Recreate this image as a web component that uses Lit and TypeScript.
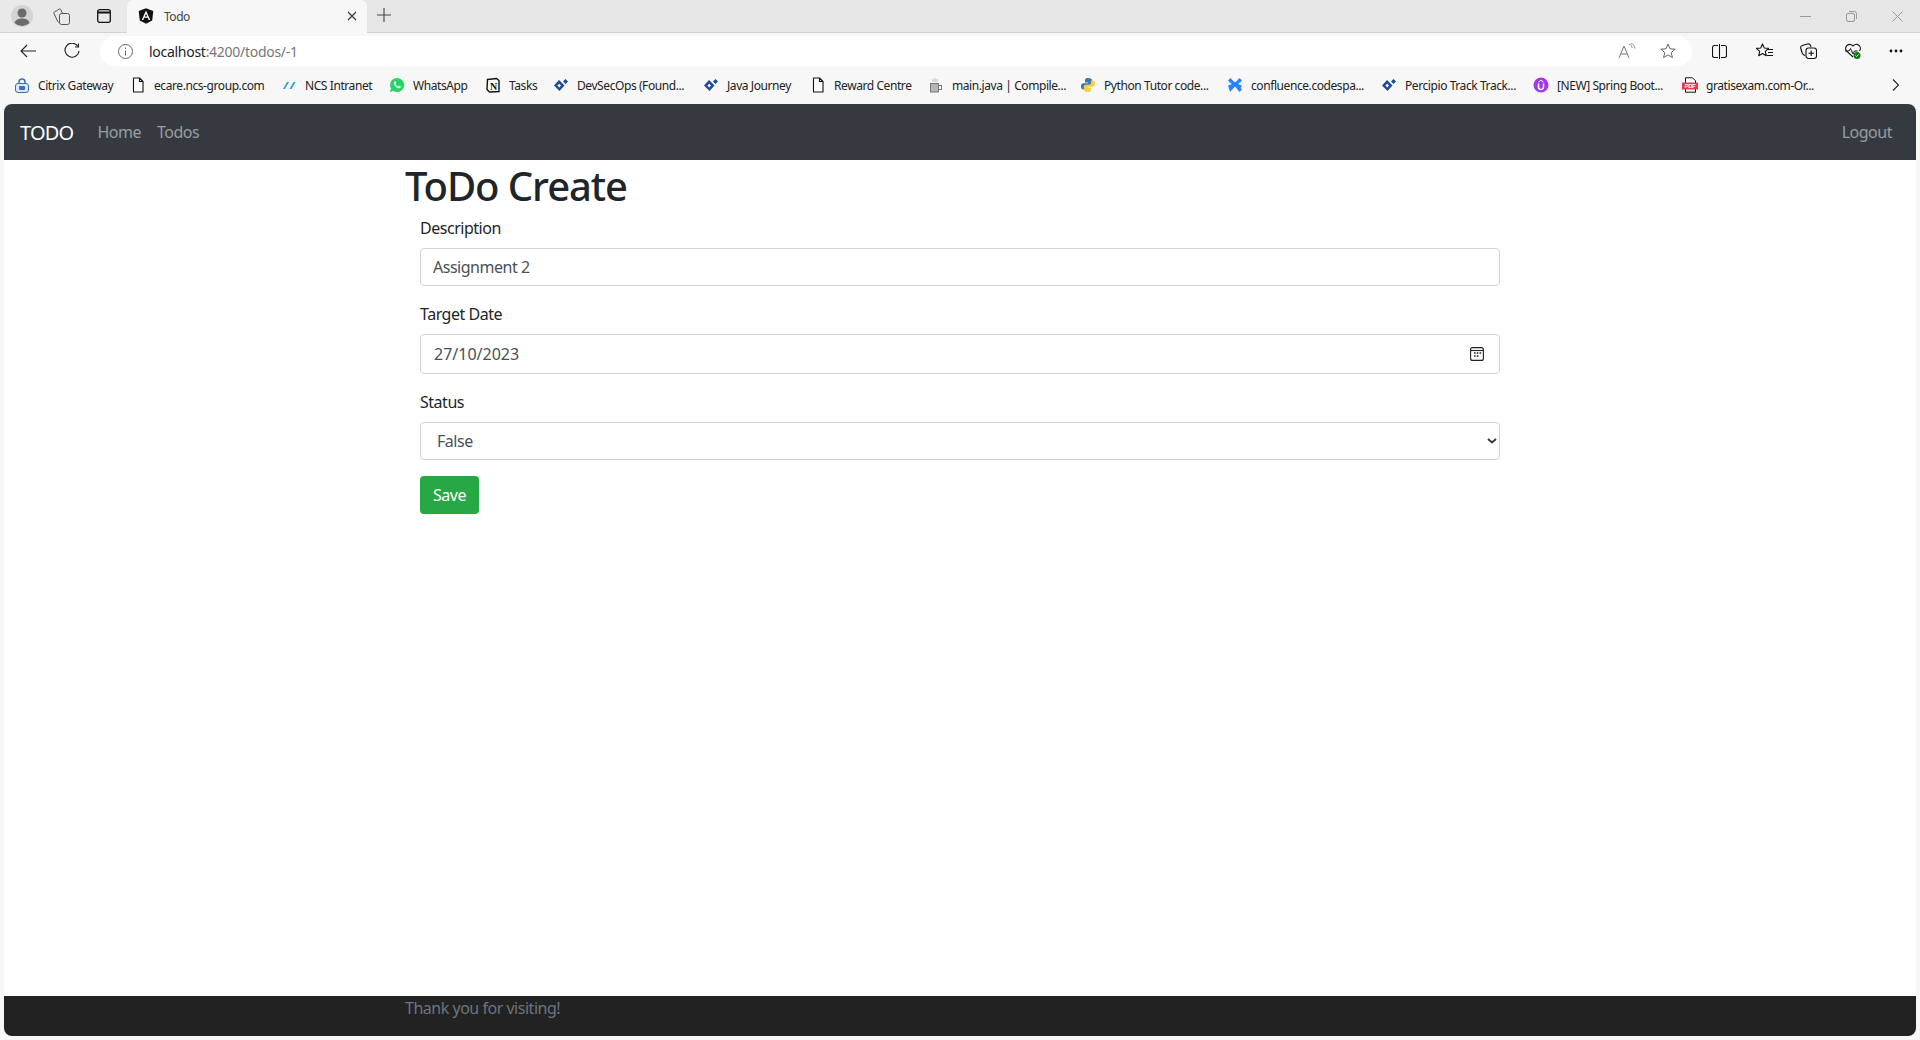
import { LitElement, css, html, svg } from "lit";
import { customElement } from "lit/decorators.js";

const fileIcon = svg`<path d="M3.5 1h6l3.5 3.5V15h-9.5z M9.5 1v3.5H13" fill="#fff" stroke="#111" stroke-width="1.1" stroke-linejoin="round"/>`;
const diamond = svg`<path d="M6 3L11.500 8.500 6.500 14 1 8.500z" fill="#1f4a94"/><path d="M6.200 6.800L8 8.500 6.200 10.400 4.400 8.500z" fill="#fff"/><path d="M12.500 2L15 4.500 12.500 7 10 4.500z" fill="#1f4a94"/>`;

const bookmarkIcons: Record<string, unknown> = {
  citrix: svg`<path d="M5 7V5a3 3 0 0 1 6 0v2" fill="none" stroke="#3d6fb8" stroke-width="1.5"/><rect x="1.5" y="6.5" width="13" height="9" rx="2.5" fill="#dbe8f8" stroke="#3d6fb8"/><rect x="5" y="9" width="6" height="4" rx="1" fill="#3d6fb8"/>`,
  file: fileIcon,
  ncs: svg`<path d="M2 12l4-7h2l-4 7z" fill="#25a5d8"/><path d="M8.5 12l4-7h2l-4 7z" fill="#25a5d8"/>`,
  whatsapp: svg`<path d="M8 1a7 7 0 0 0-6 10.500L1 15l3.600-1A7 7 0 1 0 8 1z" fill="#25d366"/><path d="M5.500 4.500c-1 1-.8 2.500.5 4.200s3 2.700 4.300 2.600c1-.1 1.700-1 1.500-1.700L10 8.600l-.9 1C8 9.200 7 8.200 6.500 7l.9-.9-.8-1.800z" fill="#fff"/>`,
  notion: svg`<path d="M2.500 2.500L11.500 1.500 14 3.500V14.500L4.500 15 2 12.500z" fill="#fff" stroke="#111" stroke-width="1.400"/><text x="8.500" y="12.500" font-size="10" font-weight="700" text-anchor="middle" font-family="Liberation Serif, serif" fill="#111">N</text>`,
  diamond,
  cup: svg`<rect x="2.500" y="6.500" width="8" height="8.500" fill="#b5b5b5" stroke="#777"/><rect x="10.500" y="8.500" width="3" height="4" fill="none" stroke="#777"/><path d="M5 2v3M7 1v4M9 2v3" stroke="#bbb"/>`,
  python: svg`<path d="M8 1C5 1 5 2.500 5 4v1.500h3.200V6.300H3.500C2 6.300 1 7.400 1 9.500c0 2 1 3 2.300 3H5V10.500c0-1.300 1-2.300 2.300-2.300h3c1.200 0 1.900-.9 1.900-2V3.500C12.200 2 10.500 1 8 1z" fill="#3b77a8"/><path d="M8 15c3 0 3-1.500 3-3v-1.500H7.800v-.8h4.700c1.500 0 2.500-1.100 2.500-3.200 0-2-1-3-2.300-3H11v2c0 1.300-1 2.300-2.300 2.300h-3c-1.200 0-1.900.9-1.900 2v2.700C3.800 14 5.500 15 8 15z" fill="#f7cf45"/>`,
  confluence: svg`<path d="M1 3.500L3.500 1c2.500 3 5 5.500 11.500 7.500L13 12C8 10 4 7 1 3.500z" fill="#2684ff"/><path d="M15 3.500L12.500 1C10 4 7.500 6.500 1 8.500L3 15l5-5.500 4.500 5.500L15 12.500C12.500 10 11 8.500 10 7.500c2-1 3.500-2.300 5-4z" fill="#2684ff"/>`,
  udemy: svg`<circle cx="8" cy="8" r="7.500" fill="#a435f0"/><path d="M5.500 6.500V10a2.500 2.500 0 0 0 5 0V6.500" fill="none" stroke="#fff" stroke-width="1.500"/><path d="M5.500 5L8 3.300 10.500 5" fill="none" stroke="#fff"/>`,
  pdf: svg`<path d="M3.500 .8h7l3 3V15.200h-10z" fill="#fff" stroke="#111"/><rect x="0" y="5.500" width="16" height="7" fill="#f03a3a"/><text x="8" y="11" font-size="6" font-weight="700" text-anchor="middle" font-family="Liberation Sans, sans-serif" fill="#fff">PDF</text>`,
};

const bookmarks = [
  { icon: "citrix", label: "Citrix Gateway", width: 75 },
  { icon: "file", label: "ecare.ncs-group.com", width: 110 },
  { icon: "ncs", label: "NCS Intranet", width: 67 },
  { icon: "whatsapp", label: "WhatsApp", width: 55 },
  { icon: "notion", label: "Tasks", width: 27 },
  { icon: "diamond", label: "DevSecOps (Found...", width: 109 },
  { icon: "diamond", label: "Java Journey", width: 66 },
  { icon: "file", label: "Reward Centre", width: 77 },
  { icon: "cup", label: "main.java | Compile...", width: 111 },
  { icon: "python", label: "Python Tutor code...", width: 106 },
  { icon: "confluence", label: "confluence.codespa...", width: 113 },
  { icon: "diamond", label: "Percipio Track Track...", width: 111 },
  { icon: "udemy", label: "[NEW] Spring Boot...", width: 108 },
  { icon: "pdf", label: "gratisexam.com-Or...", width: 110 },
];

@customElement("app-root")
export class AppRoot extends LitElement {
  static styles = css`
    * {
      margin: 0;
      padding: 0;
      box-sizing: border-box;
    }

    :host {
      display: flex;
      flex-direction: column;
      height: 1040px;
      overflow: hidden;
      background: #f7f7f7;
      font-family: "Noto Sans", "Liberation Sans", sans-serif;
      letter-spacing: -0.03em;
      color: #212529;
    }

    svg {
      display: block;
      flex: none;
    }

    .tabstrip {
      display: flex;
      align-items: flex-start;
      height: 33px;
      background: #e6e6e6;
      border-bottom: 1px solid #d2d2d2;
    }

    .tabstrip .left {
      display: flex;
      align-items: center;
      height: 32px;
      width: 127px;
      padding-left: 11px;
      background: #e9e9e9;
    }

    .tabstrip .left .collections {
      margin: 0 27px 0 20px;
    }

    .tab {
      display: flex;
      align-items: center;
      width: 240px;
      height: 33px;
      padding: 0 10px 1px 11px;
      background: #f7f7f7;
      border-radius: 6px 6px 0 0;
      font-size: 12px;
      color: #444;
    }

    .tab span {
      flex: 1;
      margin-left: 10px;
    }

    .newtab {
      margin: 8px 0 0 10px;
    }

    .winbtns {
      display: flex;
      gap: 35px;
      margin: 11px 17px 0 auto;
    }

    .toolbar {
      display: flex;
      align-items: center;
      height: 33px;
      padding: 3px 17px 0 20px;
    }

    .reload {
      margin-left: 28px;
    }

    .address {
      flex: 1;
      display: flex;
      align-items: center;
      height: 30px;
      margin: 0 20px;
      padding: 0 16px 0 18px;
      background: #fff;
      border-radius: 15px;
      font-size: 14px;
      letter-spacing: -0.02em;
      color: #777;
    }

    .address .url {
      flex: 1;
      margin-left: 16px;
    }

    .address b {
      font-weight: 400;
      color: #222;
    }

    .address .aloud {
      margin-right: 24px;
    }

    .tools {
      display: flex;
      align-items: center;
      gap: 27px;
    }

    .tools .split {
      margin-right: 2px;
    }

    .bookmarks {
      display: flex;
      align-items: center;
      gap: 17px;
      height: 38px;
      padding-left: 14px;
      font-size: 12px;
      letter-spacing: -0.035em;
      color: #222;
    }

    .bookmark {
      display: flex;
      align-items: center;
      gap: 8px;
      white-space: nowrap;
    }

    .more {
      margin-left: auto;
      margin-right: 21px;
    }

    .window {
      flex: 1;
      display: flex;
      flex-direction: column;
      margin: 0 4px 4px;
      background: #fff;
      border-radius: 8px;
      overflow: hidden;
    }

    .navbar {
      display: flex;
      align-items: center;
      height: 56px;
      padding: 8px 16px;
      background: #343a40;
    }

    .brand {
      margin-right: 16px;
      font-size: 20px;
      letter-spacing: -0.04em;
      color: #fff;
    }

    .nav-link {
      padding: 8px;
      font-size: 16px;
      color: rgba(255, 255, 255, 0.5);
    }

    .spacer {
      flex: 1;
    }

    main {
      flex: 1;
      width: 1140px;
      margin: 0 auto;
      padding: 0 15px;
    }

    h1 {
      margin-bottom: 8px;
      padding-top: 4px;
      font-size: 40px;
      font-weight: 500;
      line-height: 44px;
      letter-spacing: -0.027em;
    }

    form {
      display: flex;
      flex-direction: column;
      align-items: flex-start;
      padding: 0 15px;
    }

    .group {
      align-self: stretch;
      margin-bottom: 16px;
    }

    label {
      display: block;
      margin-bottom: 8px;
      font-size: 16px;
      line-height: 24px;
    }

    .control {
      display: flex;
      align-items: center;
      width: 100%;
      height: 38px;
      padding: 0 12px;
      background: #fff;
      border: 1px solid #ced4da;
      border-radius: 4px;
      font-family: inherit;
      font-size: 16px;
      letter-spacing: inherit;
      color: #495057;
    }

    .control.date {
      height: 40px;
      justify-content: space-between;
      padding: 0 15px 0 13px;
    }

    .control.date input {
      flex: 1;
      border: none;
      outline: none;
      font: inherit;
      letter-spacing: 0;
      color: inherit;
    }

    .select-wrap {
      position: relative;
    }

    .control.select {
      appearance: none;
      padding-left: 16px;
    }

    .select-wrap svg {
      position: absolute;
      top: 16px;
      right: 3px;
    }

    .btn {
      width: 59px;
      height: 38px;
      background: #28a745;
      border: none;
      border-radius: 4px;
      font-family: inherit;
      font-size: 16px;
      letter-spacing: inherit;
      color: #fff;
    }

    footer {
      height: 40px;
      background: #222;
    }

    footer p {
      width: 1140px;
      margin: 0 auto;
      padding: 0 15px;
      font-size: 16px;
      line-height: 24px;
      color: #6c757d;
    }
  `;

  render() {
    return html`
      <div class="tabstrip">
        <div class="left">
          <svg width="22" height="22" viewBox="0 0 22 22">
            <circle cx="11" cy="11" r="11" fill="#d4d4d2" />
            <circle cx="11" cy="8" r="4.500" fill="#6b6b6b" />
            <path d="M3.500 18c1-3.500 4-4.500 7.500-4.500s6.500 1 7.500 4.500a11 11 0 0 1-15 0z" fill="#6b6b6b" />
          </svg>
          <svg class="collections" width="17" height="17" viewBox="0 0 17 17" fill="none" stroke="#555">
            <rect x="6.500" y="5.500" width="10" height="11" rx="2" />
            <path d="M6.500 14.500c-1 0-1.500-.5-2-1.500L1 5.500c-.3-1 0-1.500 1-2L4.500 2.500M9.500 5.500L8 2c-.4-1-1-1.200-2-.8L4.500 2" />
          </svg>
          <svg width="14" height="14" viewBox="0 0 14 14" fill="none" stroke="#111" stroke-width="1.300">
            <rect x=".7" y=".7" width="12.600" height="12.600" rx="2" />
            <path d="M.7 3.500h12.600" stroke-width="2" />
          </svg>
        </div>
        <div class="tab">
          <svg width="16" height="16" viewBox="0 0 16 16">
            <path d="M8 .3l7.300 2.600-1.100 9.500L8 15.700l-6.200-3.300L.7 2.900z" fill="#111" />
            <path d="M8 2.500L3.700 12h1.600l.9-2.200h3.600l.9 2.200h1.600zM8 5.800l1.200 2.800H6.800z" fill="#fff" />
          </svg>
          <span>Todo</span>
          <svg width="10" height="10" viewBox="0 0 10 10" stroke="#333" stroke-width="1.100">
            <path d="M1 1l8 8M9 1l-8 8" />
          </svg>
        </div>
        <svg class="newtab" width="14" height="14" viewBox="0 0 14 14" stroke="#444" stroke-width="1.100">
          <path d="M7 0v14M0 7h14" />
        </svg>
        <div class="winbtns">
          <svg width="11" height="11" viewBox="0 0 11 11" stroke="#999"><path d="M0 5.500h11" /></svg>
          <svg width="11" height="11" viewBox="0 0 11 11" fill="none" stroke="#999">
            <rect x=".5" y="2.500" width="8" height="8" rx="1.500" /><path d="M3 .5h5.500a2 2 0 0 1 2 2V8" />
          </svg>
          <svg width="11" height="11" viewBox="0 0 11 11" stroke="#999"><path d="M.5 .5l10 10M10.500 .5l-10 10" /></svg>
        </div>
      </div>

      <div class="toolbar">
        <svg width="16" height="14" viewBox="0 0 16 14" fill="none" stroke="#222" stroke-width="1.100">
          <path d="M16 7H1M7 1L1 7l6 6" />
        </svg>
        <svg class="reload" width="16" height="16" viewBox="0 0 16 16" fill="none" stroke="#222" stroke-width="1.100">
          <path d="M14 3.500A7 7 0 1 0 15 8" /><path d="M14.500 .5v3.500H11" />
        </svg>
        <div class="address">
          <svg width="15" height="15" viewBox="0 0 15 15" fill="none" stroke="#666">
            <circle cx="7.500" cy="7.500" r="7" /><path d="M7.500 6.500v5M7.500 3.500v1.500" />
          </svg>
          <span class="url"><b>localhost</b>:4200/todos/-1</span>
          <svg class="aloud" width="18" height="16" viewBox="0 0 18 16" fill="none" stroke="#777">
            <path d="M1 15L6 3l5 12M3 11h6" /><path d="M11 1c2 .5 3 2 3 4M13 .5c2.200 .5 4 2.500 4 5" stroke-width=".8" />
          </svg>
          <svg width="16" height="16" viewBox="0 0 16 16" fill="none" stroke="#666">
            <path d="M8 1l2 4.800 5.200 .4-4 3.400 1.300 5L8 11.900l-4.500 2.700 1.300-5-4-3.400 5.200-.4z" stroke-linejoin="round" />
          </svg>
        </div>
        <div class="tools">
          <svg class="split" width="15" height="15" viewBox="0 0 15 15" fill="none" stroke="#111" stroke-width="1.100">
            <path d="M6 1.500H2.500a2 2 0 0 0-2 2v8a2 2 0 0 0 2 2H6M9 1.500h3.500a2 2 0 0 1 2 2v8a2 2 0 0 1-2 2H9M7.500 0v15" />
          </svg>
          <svg width="17" height="16" viewBox="0 0 17 16" fill="none" stroke="#111" stroke-width="1.100">
            <path d="M6.500 1l1.800 4 4.200 .4-3.200 3 1 4.300-3.800-2.200-3.800 2.200 1-4.300-3.200-3 4.200-.4z" stroke-linejoin="round" />
            <path d="M12 6.500h5M12 9.500h5M11 12.500h6" />
          </svg>
          <svg width="17" height="16" viewBox="0 0 17 16" fill="none" stroke="#111" stroke-width="1.100">
            <path d="M5 12.500c-1.500-.5-2.500-1.500-3-3L.8 5.500c-.5-1.500 0-2.500 1.500-3L7.500 1c1.500-.4 2.500 .2 3 1.500L11 4" />
            <rect x="6" y="5" width="10.500" height="10.500" rx="2.500" /><path d="M11.200 7.500v5.500M8.500 10.300h5.500" />
          </svg>
          <svg width="18" height="17" viewBox="0 0 18 17">
            <path d="M9 14L2.500 8A4 4 0 0 1 9 3a4 4 0 0 1 6.500 5" fill="none" stroke="#111" stroke-width="1.100" />
            <path d="M1 8h4l1.500-2.500L9 11l1.500-3h3" fill="none" stroke="#111" />
            <circle cx="13" cy="12.500" r="3.500" fill="#107c10" />
            <path d="M11.500 12.500l1 1 2-2" fill="none" stroke="#fff" />
          </svg>
          <svg width="14" height="4" viewBox="0 0 14 4" fill="#111">
            <circle cx="2" cy="2" r="1.400" /><circle cx="7" cy="2" r="1.400" /><circle cx="12" cy="2" r="1.400" />
          </svg>
        </div>
      </div>

      <div class="bookmarks">
        ${bookmarks.map(
          (b) => html`
            <a class="bookmark">
              <svg width="16" height="16" viewBox="0 0 16 16">${bookmarkIcons[b.icon]}</svg>
              <span style="width:${b.width}px">${b.label}</span>
            </a>
          `
        )}
        <svg class="more" width="7" height="12" viewBox="0 0 7 12" fill="none" stroke="#222" stroke-width="1.100">
          <path d="M1 .5L6.500 6 1 11.500" />
        </svg>
      </div>

      <div class="window">
        <nav class="navbar">
          <a class="brand">TODO</a>
          <a class="nav-link">Home</a>
          <a class="nav-link">Todos</a>
          <div class="spacer"></div>
          <a class="nav-link">Logout</a>
        </nav>
        <main>
          <h1>ToDo Create</h1>
          <form>
            <div class="group">
              <label>Description</label>
              <input class="control" type="text" .value=${"Assignment 2"} />
            </div>
            <div class="group">
              <label>Target Date</label>
              <div class="control date">
                <input type="text" .value=${"27/10/2023"} />
                <svg width="14" height="14" viewBox="0 0 14 14" fill="none" stroke="#222" stroke-width="1.100">
                  <rect x=".6" y=".6" width="12.800" height="12.800" rx="2" />
                  <path d="M.6 3.500h12.800" />
                  <path d="M4 6h1.600M6.800 6h1.600M9.600 6h1.600M4 9h1.600M6.800 9h1.600" stroke-width="1.500" />
                </svg>
              </div>
            </div>
            <div class="group">
              <label>Status</label>
              <div class="select-wrap">
                <select class="control select">
                  <option>False</option>
                  <option>True</option>
                </select>
                <svg width="10" height="6" viewBox="0 0 10 6" fill="none" stroke="#343a40" stroke-width="2">
                  <path d="M1 1l4 3.500L9 1" />
                </svg>
              </div>
            </div>
            <button class="btn" type="button">Save</button>
          </form>
        </main>
        <footer><p>Thank you for visiting!</p></footer>
      </div>
    `;
  }
}
